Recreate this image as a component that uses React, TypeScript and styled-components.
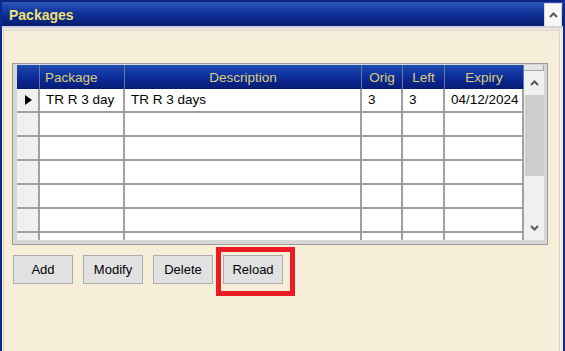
import React from "react";
import styled, { createGlobalStyle } from "styled-components";

const Global = createGlobalStyle`
  html, body { margin: 0; padding: 0; overflow: hidden; }
  body { font-family: "Liberation Sans", Arial, sans-serif; }
  * { box-sizing: border-box; }
`;

const Window = styled.div`
  width: 565px;
  height: 351px;
  background: #f6eed8;
  border-left: 2px solid #0d2b8c;
  border-right: 2px solid #0d2b8c;
  display: flex;
  flex-direction: column;
`;

const TitleBar = styled.div`
  height: 28px;
  flex: none;
  background: linear-gradient(#2c56b8 0%, #10339a 45%, #0a2684 75%, #071d70 100%);
  border-top: 2px solid #0b2680;
  border-bottom: 2px solid #c9cfe0;
  display: flex;
  align-items: center;
  justify-content: space-between;
  padding: 0 1px 0 7px;
`;

const Title = styled.span`
  color: #f0e176;
  font: bold 14px "Liberation Sans", Arial, sans-serif;
  margin-top: 1px;
`;

const CollapseButton = styled.div`
  width: 18px;
  height: 24px;
  margin-bottom: -2px;
  background: #f7f7f7;
  border: 1px solid #d6d6d6;
  display: flex;
  align-items: center;
  justify-content: center;
`;

const Panel = styled.div`
  flex: 1;
  margin: 1px 3px 0 1px;
  border-top: 2px solid #e3ded4;
  border-left: 1px solid #d8d3c8;
  border-right: 1px solid #d8d3c8;
  padding: 32px 0 0 8px;
  position: relative;
  &::before {
    content: "";
    position: absolute;
    left: 0;
    right: 0;
    top: 7px;
    height: 1px;
    background: #efe9dd;
  }
`;

const GridFrame = styled.div`
  width: 536px;
  border: 1px solid #9c9c9c;
  background: #d6d6d6;
  padding: 1px 3px 4px 4px;
`;

const GridBody = styled.div`
  display: flex;
  height: 175px;
  overflow: hidden;
`;

const Table = styled.div`
  width: 507px;
  background: #fff;
  display: grid;
  grid-template-columns: 23px 85px 237px 41px 42px 79px;
  grid-template-rows: 24px;
  grid-auto-rows: 24px;
  overflow: hidden;
`;

const HeadCell = styled.div<{ $align?: "left" | "center" }>`
  background: linear-gradient(#1e4cb0 0%, #0f33a0 40%, #0a248a 70%, #071c74 100%);
  color: #dccd78;
  font-size: 13.5px;
  display: flex;
  align-items: center;
  justify-content: ${(p) => (p.$align === "left" ? "flex-start" : "center")};
  padding-left: ${(p) => (p.$align === "left" ? "5px" : "0")};
  padding-top: 1px;
  border-right: 1px solid #6677aa;
  white-space: nowrap;
`;

const RowHead = styled.div`
  background: #f0f0f0;
  border-right: 2px solid #a0a0a0;
  border-bottom: 2px solid #a0a0a0;
  display: flex;
  align-items: center;
  padding-left: 8px;
`;

const Cell = styled.div`
  border-right: 2px solid #a0a0a0;
  border-bottom: 2px solid #a0a0a0;
  font-size: 13.5px;
  color: #000;
  padding: 3px 0 0 6px;
  white-space: nowrap;
  overflow: hidden;
`;

const ScrollBar = styled.div`
  width: 20px;
  display: flex;
  flex-direction: column;
  background: #f0f0f0;
`;

const ScrollCap = styled.div`
  height: 6px;
  background: #e6e6e6;
  border-right: 1px solid #a8a8a8;
  border-bottom: 1px solid #a8a8a8;
`;

const ScrollArrow = styled.div`
  height: 24px;
  flex: none;
  display: flex;
  align-items: center;
  justify-content: center;
`;

const Thumb = styled.div`
  height: 81px;
  margin: 0 0 0 1px;
  background: #cdcdcd;
`;

const Track = styled.div`
  flex: 1;
`;

const ButtonRow = styled.div`
  display: flex;
  gap: 10px;
  margin: 10px 0 0 1px;
`;

const Button = styled.button`
  width: 60px;
  height: 29px;
  background: #e1e1e1;
  border: 1px solid #adadad;
  border-radius: 0;
  font: 13px "Liberation Sans", Arial, sans-serif;
  color: #000;
  padding: 0;
`;

const Highlight = styled.div`
  position: relative;
`;

const HighlightBox = styled.div`
  position: absolute;
  left: -7px;
  top: -8px;
  width: 79px;
  height: 49px;
  border: 5px solid #ec1c24;
  pointer-events: none;
`;

const Chevron = ({ up }: { up?: boolean }) => (
  <svg width="9" height="6" viewBox="0 0 9 6">
    <polyline
      points={up ? "1,5 4.5,1.5 8,5" : "1,1 4.5,4.5 8,1"}
      fill="none"
      stroke="#5a5a5a"
      strokeWidth="2"
    />
  </svg>
);

const Pointer = () => (
  <svg width="7" height="10" viewBox="0 0 7 10">
    <polygon points="0,0 7,5 0,10" fill="#000" />
  </svg>
);

const columns = [
  { label: "Package", align: "left" as const },
  { label: "Description" },
  { label: "Orig" },
  { label: "Left" },
  { label: "Expiry" },
];

const rows: string[][] = [
  ["TR R 3 day", "TR R 3 days", "3", "3", "04/12/2024"],
  ["", "", "", "", ""],
  ["", "", "", "", ""],
  ["", "", "", "", ""],
  ["", "", "", "", ""],
  ["", "", "", "", ""],
  ["", "", "", "", ""],
];

export default function App() {
  return (
    <>
      <Global />
      <Window>
        <TitleBar>
          <Title>Packages</Title>
          <CollapseButton>
            <Chevron up />
          </CollapseButton>
        </TitleBar>
        <Panel>
          <GridFrame>
            <GridBody>
              <Table>
                <HeadCell />
                {columns.map((c) => (
                  <HeadCell key={c.label} $align={c.align}>
                    {c.label}
                  </HeadCell>
                ))}
                {rows.map((r, i) => (
                  <React.Fragment key={i}>
                    <RowHead>{i === 0 && <Pointer />}</RowHead>
                    {r.map((v, j) => (
                      <Cell key={j}>{v}</Cell>
                    ))}
                  </React.Fragment>
                ))}
              </Table>
              <ScrollBar>
                <ScrollCap />
                <ScrollArrow>
                  <Chevron up />
                </ScrollArrow>
                <Thumb />
                <Track />
                <ScrollArrow>
                  <Chevron />
                </ScrollArrow>
              </ScrollBar>
            </GridBody>
          </GridFrame>
          <ButtonRow>
            <Button>Add</Button>
            <Button>Modify</Button>
            <Button>Delete</Button>
            <Highlight>
              <Button>Reload</Button>
              <HighlightBox />
            </Highlight>
          </ButtonRow>
        </Panel>
      </Window>
    </>
  );
}
